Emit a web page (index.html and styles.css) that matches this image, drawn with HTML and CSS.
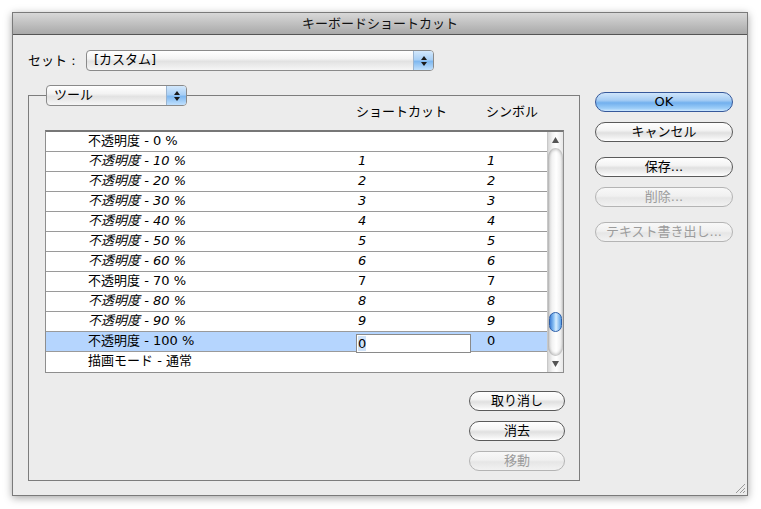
FILE: index.html
```html
<!DOCTYPE html>
<html lang="ja">
<head>
<meta charset="utf-8">
<title>キーボードショートカット</title>
<link rel="stylesheet" href="styles.css">
</head>
<body>
<div class="window">
  <div class="titlebar">キーボードショートカット</div>
  <div class="content">
    <div class="set-row">
      <span class="set-label">セット :</span>
      <div class="popup popup-set">
        <span class="popup-text">[カスタム]</span>
        <span class="popup-arrows"><svg width="8" height="12" viewBox="0 0 8 12"><path d="M4 1 L7 5 H1 Z M4 11 L7 7 H1 Z" fill="#1a1a1a"/></svg></span>
      </div>
    </div>
    <div class="main">
      <fieldset class="group">
        <legend class="group-legend">
          <div class="popup popup-tool">
            <span class="popup-text">ツール</span>
            <span class="popup-arrows"><svg width="8" height="12" viewBox="0 0 8 12"><path d="M4 1 L7 5 H1 Z M4 11 L7 7 H1 Z" fill="#1a1a1a"/></svg></span>
          </div>
        </legend>
        <div class="col-heads"><span></span><span>ショートカット</span><span>シンボル</span></div>
        <div class="table">
          <div class="list">
            <div class="row"><span class="c-label">不透明度 - 0 %</span><span class="c-key"></span><span class="c-sym"></span></div>
            <div class="row custom"><span class="c-label">不透明度 - 10 %</span><span class="c-key">1</span><span class="c-sym">1</span></div>
            <div class="row custom"><span class="c-label">不透明度 - 20 %</span><span class="c-key">2</span><span class="c-sym">2</span></div>
            <div class="row custom"><span class="c-label">不透明度 - 30 %</span><span class="c-key">3</span><span class="c-sym">3</span></div>
            <div class="row custom"><span class="c-label">不透明度 - 40 %</span><span class="c-key">4</span><span class="c-sym">4</span></div>
            <div class="row custom"><span class="c-label">不透明度 - 50 %</span><span class="c-key">5</span><span class="c-sym">5</span></div>
            <div class="row custom"><span class="c-label">不透明度 - 60 %</span><span class="c-key">6</span><span class="c-sym">6</span></div>
            <div class="row"><span class="c-label">不透明度 - 70 %</span><span class="c-key">7</span><span class="c-sym">7</span></div>
            <div class="row custom"><span class="c-label">不透明度 - 80 %</span><span class="c-key">8</span><span class="c-sym">8</span></div>
            <div class="row custom"><span class="c-label">不透明度 - 90 %</span><span class="c-key">9</span><span class="c-sym">9</span></div>
            <div class="row selected"><span class="c-label">不透明度 - 100 %</span><span class="c-key"><span class="edit"><span class="edit-sel">0</span></span></span><span class="c-sym">0</span></div>
            <div class="row"><span class="c-label">描画モード - 通常</span><span class="c-key"></span><span class="c-sym"></span></div>
          </div>
          <div class="scrollbar">
            <div class="sb-up"><svg width="7" height="6" viewBox="0 0 7 6"><path d="M3.5 0 L7 6 H0 Z" fill="#555"/></svg></div>
            <div class="sb-track"><div class="sb-thumb"></div></div>
            <div class="sb-down"><svg width="7" height="6" viewBox="0 0 7 6"><path d="M3.5 6 L7 0 H0 Z" fill="#555"/></svg></div>
          </div>
        </div>
        <div class="bottom-buttons">
          <div class="btn">取り消し</div>
          <div class="btn">消去</div>
          <div class="btn disabled">移動</div>
        </div>
      </fieldset>
      <div class="side-buttons">
        <div class="btn default">OK</div>
        <div class="btn">キャンセル</div>
        <div class="btn gap">保存...</div>
        <div class="btn disabled">削除...</div>
        <div class="btn disabled gap">テキスト書き出し...</div>
      </div>
    </div>
  </div>
  <svg class="grip" width="12" height="12" viewBox="0 0 12 12"><path d="M11 2 L2 11 M11 6 L6 11 M11 9 L9 11" stroke="#9a9a9a" stroke-width="1"/></svg>
</div>
</body>
</html>
```
FILE: styles.css
```css
* { box-sizing: border-box; }
html, body { margin: 0; background: #ffffff; }
body {
  padding: 12px;
  font-family: "DejaVu Sans", "Noto Sans CJK JP", sans-serif;
  font-size: 13px;
  color: #000;
}
.window {
  position: relative;
  width: 736px;
  height: 484px;
  background: #ececec;
  border: 1px solid #7a7a7a;
  box-shadow: 0 2px 8px rgba(0,0,0,0.35);
  display: flex;
  flex-direction: column;
}
.titlebar {
  height: 22px;
  flex: none;
  background: linear-gradient(#d8d8d8, #a9a9a9);
  border-bottom: 1px solid #555;
  text-align: center;
  line-height: 21px;
  font-size: 13px;
  color: #111;
}
.content {
  flex: 1;
  padding: 15px 14px 15px 15px;
  display: flex;
  flex-direction: column;
}
.set-row {
  display: flex;
  align-items: center;
  height: 21px;
}
.set-label {
  width: 58px;
  line-height: 16px;
}
.popup {
  display: flex;
  height: 21px;
  border: 1px solid #8a8a8a;
  border-radius: 4px;
  background: linear-gradient(#ffffff 0%, #f3f3f3 40%, #e2e2e2 55%, #f6f6f6 100%);
  overflow: hidden;
}
.popup-set { width: 348px; }
.popup-tool { width: 141px; }
.popup-text {
  flex: 1;
  padding-left: 7px;
  line-height: 18px;
}
.popup-arrows {
  width: 20px;
  display: flex;
  align-items: center;
  justify-content: center;
  background: linear-gradient(#d3e8fc 0%, #a9d0f6 45%, #7fb8f0 55%, #c0e0fd 100%);
  border-left: 1px solid #9ab4d0;
}
.main {
  display: flex;
  margin-top: 14px;
  flex: 1;
}
.group {
  margin: 0;
  width: 552px;
  border: 1px solid #7d7d7d;
  padding: 0 15px 9px 16px;
  min-width: 0;
  display: flex;
  flex-direction: column;
}
.group-legend {
  padding: 0;
  margin-left: 1px;
}
.col-heads {
  display: grid;
  grid-template-columns: 311px 130px 1fr;
  height: 24px;
  line-height: 12px;
}
.table {
  display: flex;
  height: 243px;
  border: 1px solid #8e8e8e;
  border-top: 2px solid #777;
  background: #fff;
}
.list {
  width: 501px;
  display: flex;
  flex-direction: column;
}
.row {
  display: grid;
  grid-template-columns: 310px 130px 1fr;
  height: 20px;
  border-bottom: 1px solid #9a9a9a;
  line-height: 18px;
}
.row:last-child { border-bottom: none; }
.row.custom { font-style: italic; }
.row.selected { background: #b5d5fe; }
.c-label { padding-left: 42px; white-space: nowrap; }
.c-key { padding-left: 2px; }
.c-sym { padding-left: 1px; }
.row.selected .c-key { padding-left: 0; }
.edit {
  display: block;
  width: 115px;
  height: 19px;
  margin-top: 2px;
  border: 1px solid #8a8a8a;
  background: #fff;
  padding-left: 1px;
  line-height: 17px;
  font-style: normal;
}
.edit-sel { background: #cfe2f8; }
.scrollbar {
  width: 16px;
  display: flex;
  flex-direction: column;
  background: linear-gradient(90deg, #d6d6d6 0%, #f4f4f4 30%, #ffffff 55%, #e8e8e8 100%);
  border-left: 1px solid #c8c8c8;
}
.sb-up, .sb-down {
  height: 16px;
  display: flex;
  align-items: center;
  justify-content: center;
  flex: none;
}
.sb-track {
  flex: 1;
  padding: 164px 1px 0 1px;
  border-radius: 7px / 10px;
  box-shadow: inset 0 2px 3px rgba(0,0,0,0.2), inset 0 -2px 3px rgba(0,0,0,0.2);
}
.sb-thumb {
  height: 20px;
  border-radius: 7px;
  border: 1px solid #2d5fa8;
  background: linear-gradient(90deg, #3f7fd6 0%, #8ec4f6 35%, #d8eeff 55%, #5a9fe6 100%);
}
.bottom-buttons {
  display: flex;
  flex-direction: column;
  align-items: flex-end;
  gap: 10px;
  margin-top: 18px;
  margin-right: -1px;
}
.bottom-buttons .btn { width: 96px; }
.side-buttons {
  width: 138px;
  margin-left: 15px;
  margin-top: 7px;
  display: flex;
  flex-direction: column;
  gap: 10px;
}
.side-buttons .gap { margin-top: 5px; }
.btn {
  height: 20px;
  border: 1px solid #5a5a5a;
  border-radius: 10px;
  background: linear-gradient(#fefefe 0%, #f4f4f4 40%, #e0e0e0 55%, #f3f3f3 85%, #ffffff 100%);
  text-align: center;
  line-height: 18px;
  font-size: 13px;
  color: #000;
  white-space: nowrap;
}
.btn.default {
  border-color: #36589a;
  background: linear-gradient(#cfe5fb 0%, #a6cdf4 40%, #72b0ee 55%, #9ccdf8 85%, #cde8ff 100%);
}
.btn.disabled {
  border-color: #b4b4b4;
  color: #9c9c9c;
  background: linear-gradient(#f8f8f8 0%, #f0f0f0 45%, #e6e6e6 55%, #f2f2f2 100%);
}
.grip {
  position: absolute;
  right: 1px;
  bottom: 1px;
}
```
